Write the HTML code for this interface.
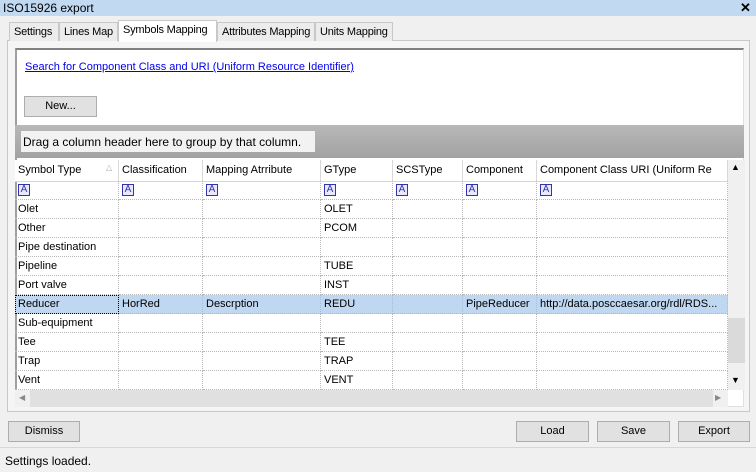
<!DOCTYPE html><html><head><style>
*{box-sizing:border-box;margin:0;padding:0}
body{width:756px;height:472px;background:#f0f0f0;font-family:"Liberation Sans",sans-serif;font-size:11px;color:#000;position:relative;overflow:hidden}
.a{position:absolute}
.tab{position:absolute;top:22px;height:19px;border:1px solid #c8c8c8;border-bottom:none;background:#ececec;padding:3px 0 0 4px;font-size:11px;white-space:nowrap;overflow:hidden;letter-spacing:-0.2px}
.btn{position:absolute;border:1px solid #adadad;background:#e1e1e1;text-align:center;font-size:11px;line-height:19px}
.cell{position:absolute;height:19px;border-right:1px dotted #b8b8b8;border-bottom:1px dotted #b8b8b8;padding:3px 0 0 3px;white-space:nowrap;overflow:hidden}
.hd{position:absolute;top:160px;height:22px;border-right:1px solid #d8d8d8;background:#fff;padding:4px 0 0 3px;white-space:nowrap;overflow:hidden}
.fi{display:inline-block;width:12px;height:12px;border:1px solid #3333aa;background:#e8e8ff;color:#3333aa;font-size:10px;line-height:10px;text-align:center}
</style></head><body>
<div class="a" style="left:0;top:0;width:756px;height:16px;background:#c2d9f2"></div>
<div class="a" style="left:3px;top:1px;font-size:12px">ISO15926 export</div>
<div class="a" style="left:740px;top:0;font-size:13px;font-weight:bold">✕</div>
<div class="a" style="left:7px;top:40px;width:743px;height:372px;border:1px solid #c8c8c8;background:#f5f5f5"></div>
<div class="tab" style="left:9px;width:50px">Settings</div>
<div class="tab" style="left:59px;width:59px">Lines Map</div>
<div class="tab" style="left:118px;top:20px;height:22px;width:99px;background:#fff;padding-top:3px">Symbols Mapping</div>
<div class="tab" style="left:217px;width:98px">Attributes Mapping</div>
<div class="tab" style="left:315px;width:78px">Units Mapping</div>
<div class="a" style="left:15px;top:48px;width:729px;height:359px;background:#fff;border:1px solid #e0e0e0;border-top:2px solid #808080;border-left:2px solid #a0a0a0"></div>
<div class="a" style="left:25px;top:61px;color:#0000ee;text-decoration:underline">Search for Component Class and URI (Uniform Resource Identifier)</div>
<div class="btn" style="left:24px;top:96px;width:73px;height:21px">New...</div>
<div class="a" style="left:15px;top:125px;width:729px;height:33px;background:linear-gradient(#b8b8b8,#a2a2a2)"></div>
<div class="a" style="left:21px;top:131px;width:294px;height:21px;background:#f2f2f2;padding:4px 0 0 2px;font-size:12px">Drag a column header here to group by that column.</div>
<div class="hd" style="left:15px;width:104px">Symbol Type<span style="position:absolute;left:91px;top:3px;color:#aaa;font-size:8px">△</span></div>
<div class="hd" style="left:119px;width:84px">Classification</div>
<div class="hd" style="left:203px;width:118px">Mapping Atrribute</div>
<div class="hd" style="left:321px;width:72px">GType</div>
<div class="hd" style="left:393px;width:70px">SCSType</div>
<div class="hd" style="left:463px;width:74px">Component</div>
<div class="hd" style="left:537px;width:191px">Component Class URI (Uniform Re</div>
<div class="a" style="left:15px;top:181px;width:713px;height:1px;background:#d8d8d8"></div>
<div id="g"></div>
<div class="a" style="left:728px;top:160px;width:17px;height:230px;background:#f0f0f0"></div>
<div class="a" style="left:728px;top:318px;width:17px;height:45px;background:#dadada"></div>
<div class="a" style="left:731px;top:162px;font-size:9px">▲</div>
<div class="a" style="left:731px;top:375px;font-size:9px">▼</div>
<div class="a" style="left:15px;top:390px;width:713px;height:17px;background:#f0f0f0"></div>
<div class="a" style="left:30px;top:390px;width:683px;height:17px;background:#e0e0e0"></div>
<div class="a" style="left:19px;top:393px;font-size:8px;color:#888">◀</div>
<div class="a" style="left:715px;top:393px;font-size:8px;color:#888">▶</div>
<div class="btn" style="left:8px;top:421px;width:72px;height:21px">Dismiss</div>
<div class="btn" style="left:516px;top:421px;width:73px;height:21px">Load</div>
<div class="btn" style="left:597px;top:421px;width:73px;height:21px">Save</div>
<div class="btn" style="left:678px;top:421px;width:72px;height:21px">Export</div>
<div class="a" style="left:0;top:447px;width:756px;height:1px;background:#d7d7d7"></div>
<div class="a" style="left:5px;top:454px;font-size:12px">Settings loaded.</div>
<script>
var cols=[15,119,203,321,393,463,537,728];
var rows=[["","","","","","",""],["Olet","","","OLET"],["Other","","","PCOM"],["Pipe destination"],["Pipeline","","","TUBE"],["Port valve","","","INST"],["Reducer","HorRed","Descrption","REDU","","PipeReducer","http://data.posccaesar.org/rdl/RDS..."],["Sub-equipment"],["Tee","","","TEE"],["Trap","","","TRAP"],["Vent","","","VENT"]];
var h="";
rows.forEach(function(r,i){var t=181+i*19;var sel=i==6;
for(var c=0;c<7;c++){var txt=r[c]||"";if(i==0)txt='<span class="fi">A</span>';
h+='<div class="cell" style="left:'+cols[c]+'px;top:'+t+'px;width:'+(cols[c+1]-cols[c])+'px;'+(sel?'background:#bfd7f0;':'')+(i==0?'padding-top:2px;':'')+(sel&&c==0?'outline:1px dotted #000;outline-offset:-1px;':'')+'">'+txt+'</div>';}});
document.getElementById("g").innerHTML=h;
</script>
</body></html>
